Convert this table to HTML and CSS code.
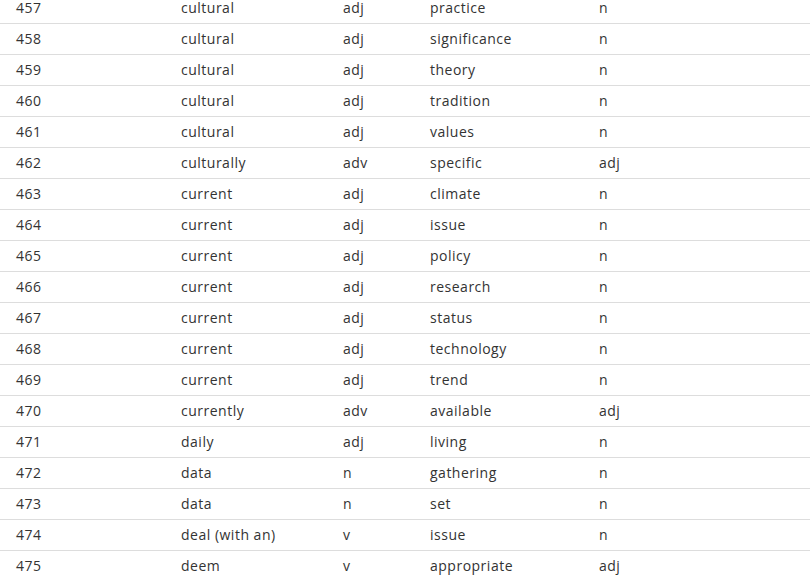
FILE: index.html
```html
<!DOCTYPE html>
<html>
<head>
<meta charset="utf-8">
<link rel="stylesheet" href="styles.css">
</head>
<body>
<div class="wrap">
<table class="colloc">
<tbody>
<tr><td>457</td><td>cultural</td><td>adj</td><td>practice</td><td>n</td></tr>
<tr><td>458</td><td>cultural</td><td>adj</td><td>significance</td><td>n</td></tr>
<tr><td>459</td><td>cultural</td><td>adj</td><td>theory</td><td>n</td></tr>
<tr><td>460</td><td>cultural</td><td>adj</td><td>tradition</td><td>n</td></tr>
<tr><td>461</td><td>cultural</td><td>adj</td><td>values</td><td>n</td></tr>
<tr><td>462</td><td>culturally</td><td>adv</td><td>specific</td><td>adj</td></tr>
<tr><td>463</td><td>current</td><td>adj</td><td>climate</td><td>n</td></tr>
<tr><td>464</td><td>current</td><td>adj</td><td>issue</td><td>n</td></tr>
<tr><td>465</td><td>current</td><td>adj</td><td>policy</td><td>n</td></tr>
<tr><td>466</td><td>current</td><td>adj</td><td>research</td><td>n</td></tr>
<tr><td>467</td><td>current</td><td>adj</td><td>status</td><td>n</td></tr>
<tr><td>468</td><td>current</td><td>adj</td><td>technology</td><td>n</td></tr>
<tr><td>469</td><td>current</td><td>adj</td><td>trend</td><td>n</td></tr>
<tr><td>470</td><td>currently</td><td>adv</td><td>available</td><td>adj</td></tr>
<tr><td>471</td><td>daily</td><td>adj</td><td>living</td><td>n</td></tr>
<tr><td>472</td><td>data</td><td>n</td><td>gathering</td><td>n</td></tr>
<tr><td>473</td><td>data</td><td>n</td><td>set</td><td>n</td></tr>
<tr><td>474</td><td>deal (with an)</td><td>v</td><td>issue</td><td>n</td></tr>
<tr><td>475</td><td>deem</td><td>v</td><td>appropriate</td><td>adj</td></tr>
</tbody>
</table>
</div>
</body>
</html>
```
FILE: styles.css
```css
html, body {
  margin: 0;
  padding: 0;
  background: #fff;
  overflow: hidden;
}
.wrap {
  margin-top: -7px;
}
.colloc {
  width: 810px;
  border-collapse: collapse;
  table-layout: fixed;
  font-family: "Open Sans", "Noto Sans", sans-serif;
  font-size: 14px;
  letter-spacing: 0.5px;
  color: #333;
}
.colloc td {
  height: 29px;
  padding: 0 0 1px 0;
  vertical-align: middle;
  border-top: 1px solid #ddd;
  line-height: 20px;
  white-space: nowrap;
}
.colloc tr:first-child td {
  border-top: none;
}
.colloc td:nth-child(1) { width: 165px; padding-left: 16px; }
.colloc td:nth-child(2) { width: 162px; }
.colloc td:nth-child(3) { width: 87px; }
.colloc td:nth-child(4) { width: 169px; }
```
